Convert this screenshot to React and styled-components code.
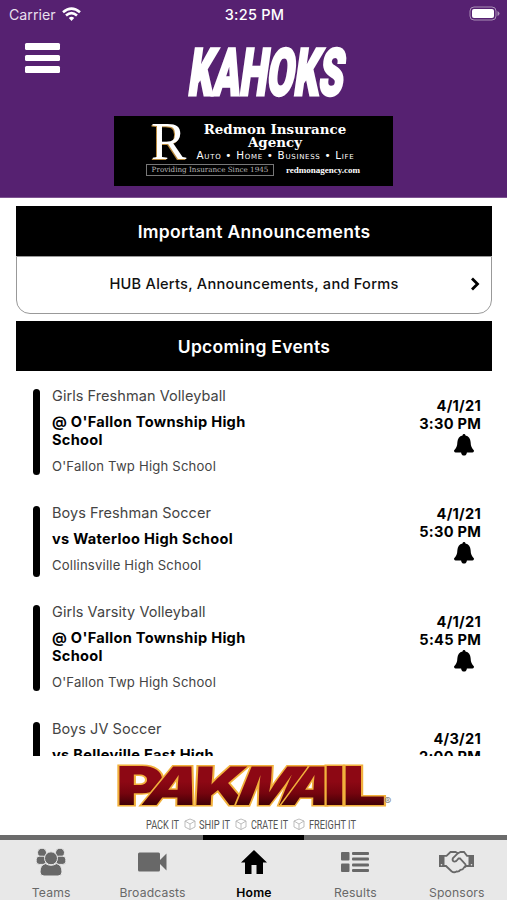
import React from 'react';
import styled, { createGlobalStyle } from 'styled-components';

const GlobalStyle = createGlobalStyle`
  * {
    box-sizing: border-box;
  }

  body {
    margin: 0;
    background: #fff;
    font-family: Inter, 'Liberation Sans', sans-serif;
  }
`;

const Screen = styled.div`
  display: flex;
  flex-direction: column;
  width: 507px;
  height: 900px;
  overflow: hidden;
  background: #fff;
`;

const Header = styled.header`
  height: 198px;
  flex-shrink: 0;
  background: #562171;
  border-bottom: 1px solid #7d5391;
`;

const StatusBar = styled.div`
  display: grid;
  grid-template-columns: 1fr auto 1fr;
  align-items: center;
  height: 28px;
  padding: 0 7px 0 9px;
  color: #fff;
  font-size: 14.5px;
`;

const Carrier = styled.div`
  display: flex;
  align-items: center;
  gap: 6px;
  color: #e8dfed;
  font-size: 14.2px;
`;

const Clock = styled.div`
  font-weight: 500;
  letter-spacing: 0.25px;
`;

const Battery = styled.svg`
  justify-self: end;
  margin-top: -2px;
`;

const TitleBar = styled.div`
  display: grid;
  grid-template-columns: 162px 1fr 162px;
  height: 88px;
`;

const MenuButton = styled.button`
  display: flex;
  flex-direction: column;
  gap: 5px;
  width: 35px;
  height: 30px;
  margin: 15px 0 0 25px;
  padding: 0;
  border: none;
  background: transparent;
`;

const MenuLine = styled.span`
  width: 35px;
  height: 6.5px;
  border-radius: 1.5px;
  background: #fff;
`;

const TeamLogo = styled.svg`
  display: block;
  width: 183px;
  height: 76px;
  overflow: visible;
`;

const InsuranceAd = styled.div`
  width: 279px;
  height: 70px;
  margin: 0 auto 0 114px;
  padding: 7px 0 0 32px;
  background: #000;
  color: #fff;
  font-family: 'DejaVu Serif', 'Liberation Serif', serif;
`;

const AdTop = styled.div`
  display: flex;
  height: 40px;
`;

const AdInitial = styled.div`
  width: 44px;
  padding-left: 5px;
  font-family: 'Liberation Serif', serif;
  font-size: 53px;
  line-height: 37px;
  text-shadow: -1px 1px 0 #b98a3c;
`;

const AdCopy = styled.div`
  width: 170px;
  text-align: center;
`;

const AdName = styled.div`
  font-size: 13.4px;
  font-weight: bold;
  line-height: 13px;
  letter-spacing: 0.05px;
  white-space: nowrap;
`;

const AdServices = styled.div`
  margin: 1px 0 0 -6px;
  width: 183px;
  font-family: 'DejaVu Sans', sans-serif;
  font-size: 10.4px;
  font-variant: small-caps;
  line-height: 11px;
  letter-spacing: 0.7px;
  white-space: nowrap;
`;

const AdBottom = styled.div`
  display: flex;
  align-items: center;
  gap: 12px;
  margin-top: 1px;
`;

const AdSince = styled.div`
  width: 128px;
  height: 12px;
  border: 1px solid #777;
  color: #bbb;
  font-size: 7.2px;
  line-height: 10px;
  text-align: center;
  white-space: nowrap;
`;

const AdLink = styled.div`
  font-family: 'Liberation Serif', serif;
  font-size: 9px;
  font-weight: bold;
`;

const Content = styled.main`
  flex: none;
  height: 558px;
  padding: 8px 15px 0 16px;
  overflow: hidden;
`;

const SectionTitle = styled.h2`
  height: 50px;
  margin: 0;
  background: #000;
  color: #fff;
  font-size: 17.5px;
  font-weight: 600;
  line-height: 51px;
  letter-spacing: 0.28px;
  text-align: center;
`;

const Announcement = styled.div`
  display: grid;
  grid-template-columns: 1fr auto 1fr;
  align-items: center;
  height: 58px;
  margin-bottom: 7px;
  padding: 0 11px 2px;
  border: 1px solid #999;
  border-radius: 0 0 14px 14px;
  color: #111;
  font-size: 14.6px;
  font-weight: 500;
  letter-spacing: 0.24px;

  span {
    grid-column: 2;
  }

  svg {
    justify-self: end;
  }
`;

const EventList = styled.div`
  display: flex;
  flex-direction: column;
  gap: 29px;
  padding: 16px 10px 0 17px;
`;

const EventRow = styled.article`
  display: flex;
  flex-shrink: 0;
`;

const EventBar = styled.div`
  width: 7px;
  min-height: 71px;
  margin: 2px 12px ${(props) => (props.$short ? '-3px' : '0')} 0;
  border-radius: 4px;
  background: #000;
`;

const EventInfo = styled.div`
  flex: 1;
  line-height: 18px;
`;

const Sport = styled.div`
  color: #444;
  font-size: 14.5px;
  letter-spacing: 0.06px;
`;

const Opponent = styled.div`
  width: 205px;
  margin: 8px 0;
  color: #000;
  font-size: 14.6px;
  font-weight: 700;
  letter-spacing: 0.29px;
`;

const Venue = styled.div`
  color: #444;
  font-size: 13.1px;
  letter-spacing: 0.2px;
`;

const EventTime = styled.div`
  display: flex;
  flex-direction: column;
  align-items: flex-end;
  align-self: center;
  height: 68px;
  padding-right: 1px;
  font-size: 14.6px;
  font-weight: 700;
  line-height: 18px;
  letter-spacing: 0.25px;

  svg {
    margin: 1px 7px 0 0;
  }
`;

const SponsorBanner = styled.svg`
  display: block;
  width: 507px;
  height: 79px;
  flex-shrink: 0;
  overflow: visible;
`;

const TabBar = styled.nav`
  display: grid;
  grid-template-columns: repeat(5, 1fr);
  height: 65px;
  background: #e8e8e8;
`;

const Tab = styled.div`
  display: flex;
  flex-direction: column;
  align-items: center;
  padding-left: 1px;
  border-top: 5px solid ${(props) => (props.$active ? '#000' : '#6b6b6b')};
  color: ${(props) => (props.$active ? '#000' : '#686868')};
  font-size: 12.2px;
  font-weight: ${(props) => (props.$active ? 600 : 400)};
  letter-spacing: 0.15px;
`;

const TabIcon = styled.div`
  display: flex;
  align-items: center;
  justify-content: center;
  height: 44px;
`;

const TabLabel = styled.div`
  line-height: 17px;
`;

const WifiIcon = () => (
  <svg width="19" height="15" viewBox="0 0 19 15" fill="none" stroke="#fff" strokeWidth="2.6">
    <path d="M1 5.2Q9.5-2 18 5.2" />
    <path d="M4 8.5Q9.5 3.7 15 8.5" />
    <path d="M6.8 11.1Q9.5 8.6 12.2 11.1L9.5 14Z" fill="#fff" stroke="none" />
  </svg>
);

const BatteryIcon = () => (
  <Battery width="31" height="15" viewBox="0 0 31 15">
    <rect x="1" y="1" width="26" height="13" rx="4" fill="none" stroke="#aa90b7" />
    <rect x="3" y="3" width="22" height="9" rx="2" fill="#fff" />
    <path d="M28.5 5v5q2-1 2-2.5t-2-2.5z" fill="#aa90b7" />
  </Battery>
);

const BellIcon = () => (
  <svg width="20" height="22" viewBox="0 0 20 22" fill="#000">
    <path d="M10 0Q11.3 0 11.5 1.4Q16.3 2.6 16.6 8Q16.7 13.5 20 16.5Q20 18.4 18.5 18.4H12.9Q12.6 21.5 10 21.5T7.1 18.4H1.5Q0 18.4 0 16.5Q3.3 13.5 3.4 8Q3.7 2.6 8.5 1.4Q8.7 0 10 0Z" />
  </svg>
);

const TeamsIcon = () => (
  <svg width="30" height="28" viewBox="0 0 30 28" fill="currentColor" stroke="#e8e8e8">
    <circle cx="6" cy="4.7" r="4.5" />
    <circle cx="24" cy="4.7" r="4.5" />
    <rect x="0.2" y="8.2" width="10" height="8.2" rx="3" />
    <rect x="19.8" y="8.2" width="10" height="8.2" rx="3" />
    <circle cx="15" cy="10.3" r="6.5" />
    <path d="M9.5 15.6Q15 19 20.5 15.6Q26 17 26 24Q26 28 22 28H8Q4 28 4 24Q4 17 9.5 15.6Z" />
  </svg>
);

const CameraIcon = () => (
  <svg width="29" height="20" viewBox="0 0 29 20" fill="currentColor">
    <rect y="0.5" width="22" height="19" rx="1.5" />
    <path d="M22 8L28.5 1.5V18.5L22 12Z" />
  </svg>
);

const HomeIcon = () => (
  <svg width="26" height="24" viewBox="0 0 26 24" fill="currentColor">
    <path d="M13 0L26 12.5H22V24H15.5V15H10.5V24H4V12.5H0Z" />
  </svg>
);

const ResultsIcon = () => (
  <svg width="28" height="20" viewBox="0 0 28 20" fill="currentColor">
    <rect width="8.5" height="8.5" rx="1" />
    <rect y="11.5" width="8.5" height="8.5" rx="1" />
    <rect x="11" width="17" height="3" rx="1" />
    <rect x="11" y="5.5" width="17" height="3" rx="1" />
    <rect x="11" y="11.5" width="17" height="3" rx="1" />
    <rect x="11" y="17" width="17" height="3" rx="1" />
  </svg>
);

const HandshakeIcon = () => (
  <svg width="35" height="24" viewBox="0 0 35 24" fill="none" stroke="currentColor" strokeWidth="1.8">
    <path d="M0 5H5.5V17H0ZM29.5 5H35V17H29.5Z" fill="currentColor" stroke="none" />
    <path d="M5 5.8H7.5L11.5 2H16.5L19 3.2L21.5 2H25L28 5.8H30" />
    <path d="M5 16H7L12.5 21.2Q15 23.2 17.5 21.5Q20 22 21.5 19.8Q24 20 25 17.5L27.5 16H30" />
    <path d="M19 3.2L14 8Q12.8 10.5 14.8 11.5Q17 12.2 19.5 8.5L21 8.5L26.5 14.5Q27 16.5 25 17.5" />
    <circle cx="2.5" cy="14.8" r="0.8" fill="#e8e8e8" stroke="none" />
    <circle cx="32.5" cy="14.8" r="0.8" fill="#e8e8e8" stroke="none" />
  </svg>
);

const Box = ({ x }) => (
  <path
    d="M0-5L5-3V3L0 5.5L-5 3V-3ZM-5-3L0 0L5-3M0 0V5.5"
    transform={`translate(${x} 68)`}
    fill="none"
    stroke="#b5b5b5"
    strokeWidth="0.9"
  />
);

// the wordmark leans its A and M forward while the other letters stay upright
const letters = [
  { char: 'P', x: 116, width: 48, skew: 0 },
  { char: 'A', x: 140, width: 54, skew: -22 },
  { char: 'K', x: 193, width: 55, skew: -3 },
  { char: 'M', x: 233, width: 62, skew: -22 },
  { char: 'A', x: 280, width: 48, skew: -20 },
  { char: 'I', x: 323, width: 23, skew: 0 },
  { char: 'L', x: 342, width: 44, skew: 0 },
];

const PakMail = () => (
  <SponsorBanner viewBox="0 0 507 79">
    <defs>
      <linearGradient id="maroon" gradientUnits="userSpaceOnUse" x1="0" y1="-39" x2="0" y2="0">
        <stop offset="0.4" stopColor="#8d0814" />
        <stop offset="0.7" stopColor="#76040e" />
        <stop offset="1" stopColor="#410006" />
      </linearGradient>
    </defs>
    <g
      fontFamily="Inter, sans-serif"
      fontSize="53"
      fontWeight="900"
      fill="url(#maroon)"
      stroke="#f2b13c"
      strokeWidth="3"
      paintOrder="stroke"
    >
      {letters.map((letter) => (
        <text
          key={letter.x}
          transform={`translate(${letter.x} 49) skewX(${letter.skew})`}
          textLength={letter.width}
          lengthAdjust="spacingAndGlyphs"
        >
          {letter.char}
        </text>
      ))}
    </g>
    <text x="384" y="49" fontFamily="Inter, sans-serif" fontSize="11" fill="#888">®</text>
    <g fontFamily="Roboto, sans-serif" fontSize="12.2" fill="#555">
      <text x="146" y="73" textLength="33" lengthAdjust="spacingAndGlyphs">PACK IT</text>
      <text x="199" y="73" textLength="31" lengthAdjust="spacingAndGlyphs">SHIP IT</text>
      <text x="251" y="73" textLength="37" lengthAdjust="spacingAndGlyphs">CRATE IT</text>
      <text x="309" y="73" textLength="47" lengthAdjust="spacingAndGlyphs">FREIGHT IT</text>
    </g>
    <Box x={190} />
    <Box x={241} />
    <Box x={299} />
  </SponsorBanner>
);

const events = [
  {
    sport: 'Girls Freshman Volleyball',
    opponent: "@ O'Fallon Township High School",
    venue: "O'Fallon Twp High School",
    date: '4/1/21',
    time: '3:30 PM',
  },
  {
    sport: 'Boys Freshman Soccer',
    opponent: 'vs Waterloo High School',
    venue: 'Collinsville High School',
    date: '4/1/21',
    time: '5:30 PM',
    short: true,
  },
  {
    sport: 'Girls Varsity Volleyball',
    opponent: "@ O'Fallon Township High School",
    venue: "O'Fallon Twp High School",
    date: '4/1/21',
    time: '5:45 PM',
  },
  {
    sport: 'Boys JV Soccer',
    opponent: 'vs Belleville East High School',
    venue: 'Collinsville High School',
    date: '4/3/21',
    time: '2:00 PM',
  },
];

const tabs = [
  { label: 'Teams', icon: <TeamsIcon /> },
  { label: 'Broadcasts', icon: <CameraIcon /> },
  { label: 'Home', icon: <HomeIcon />, active: true },
  { label: 'Results', icon: <ResultsIcon /> },
  { label: 'Sponsors', icon: <HandshakeIcon /> },
];

const App = () => (
  <>
    <GlobalStyle />
    <Screen>
      <Header>
        <StatusBar>
          <Carrier>
            Carrier
            <WifiIcon />
          </Carrier>
          <Clock>3:25 PM</Clock>
          <BatteryIcon />
        </StatusBar>
        <TitleBar>
          <MenuButton aria-label="Menu">
            <MenuLine />
            <MenuLine />
            <MenuLine />
          </MenuButton>
          <TeamLogo viewBox="0 0 183 76">
            <text
              transform="translate(25 67) skewX(-8)"
              textLength="155"
              lengthAdjust="spacingAndGlyphs"
              fontFamily="Roboto, sans-serif"
              fontSize="65"
              fontWeight="900"
              fill="#fff"
              stroke="#fff"
              strokeWidth="3"
            >
              KAHOKS
            </text>
          </TeamLogo>
        </TitleBar>
        <InsuranceAd>
          <AdTop>
            <AdInitial>R</AdInitial>
            <AdCopy>
              <AdName>Redmon Insurance</AdName>
              <AdName>Agency</AdName>
              <AdServices>Auto • Home • Business • Life</AdServices>
            </AdCopy>
          </AdTop>
          <AdBottom>
            <AdSince>Providing Insurance Since 1945</AdSince>
            <AdLink>redmonagency.com</AdLink>
          </AdBottom>
        </InsuranceAd>
      </Header>

      <Content>
        <SectionTitle>Important Announcements</SectionTitle>
        <Announcement>
          <span>HUB Alerts, Announcements, and Forms</span>
          <svg width="10" height="14" viewBox="0 0 10 14" fill="none" stroke="#000" strokeWidth="2.8">
            <path d="M2 1.5L7.5 7L2 12.5" />
          </svg>
        </Announcement>
        <SectionTitle>Upcoming Events</SectionTitle>
        <EventList>
          {events.map((event) => (
            <EventRow key={event.date + event.time}>
              <EventBar $short={event.short} />
              <EventInfo>
                <Sport>{event.sport}</Sport>
                <Opponent>{event.opponent}</Opponent>
                <Venue>{event.venue}</Venue>
              </EventInfo>
              <EventTime>
                <div>{event.date}</div>
                <div>{event.time}</div>
                <BellIcon />
              </EventTime>
            </EventRow>
          ))}
        </EventList>
      </Content>

      <PakMail />

      <TabBar>
        {tabs.map((tab) => (
          <Tab key={tab.label} $active={tab.active}>
            <TabIcon>{tab.icon}</TabIcon>
            <TabLabel>{tab.label}</TabLabel>
          </Tab>
        ))}
      </TabBar>
    </Screen>
  </>
);

export default App;
